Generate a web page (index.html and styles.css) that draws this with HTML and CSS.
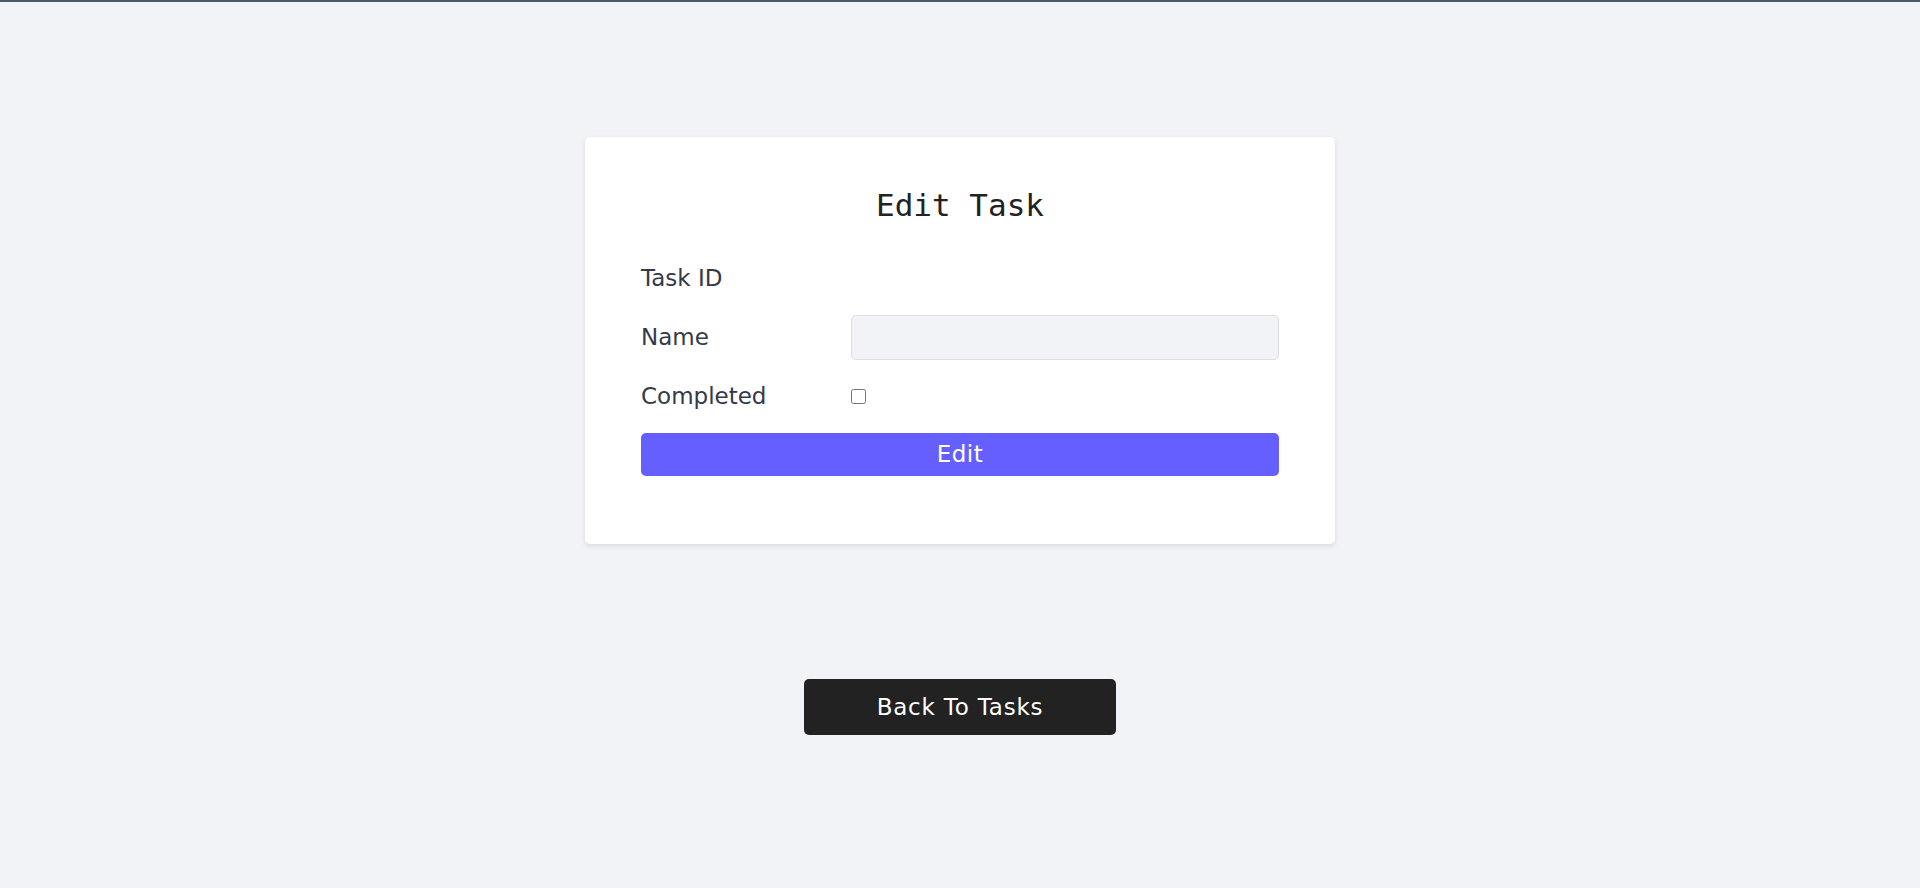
FILE: index.html
```html
<!DOCTYPE html>
<html lang="en">
<head>
<meta charset="utf-8">
<title>Edit Task</title>
<link rel="stylesheet" href="styles.css">
</head>
<body>
<main class="page">
  <section class="card">
    <h1 class="title">Edit Task</h1>
    <form class="form">
      <div class="row">
        <label class="label">Task ID</label>
        <span class="value"></span>
      </div>
      <div class="row">
        <label class="label" for="name">Name</label>
        <input class="input" id="name" type="text">
      </div>
      <div class="row">
        <label class="label" for="completed">Completed</label>
        <input class="check" id="completed" type="checkbox">
      </div>
      <button class="submit" type="button">Edit</button>
    </form>
  </section>
  <button class="back" type="button">Back To Tasks</button>
</main>
</body>
</html>
```
FILE: styles.css
```css
html, body {
  margin: 0;
  padding: 0;
}
body {
  background: #f2f3f7;
  border-top: 2px solid #4b5866;
  min-height: 886px;
  font-family: "DejaVu Sans", "Noto Sans", sans-serif;
  color: #343a4a;
}
.page {
  display: flex;
  flex-direction: column;
  align-items: center;
  padding-top: 135px;
}
.card {
  width: 750px;
  box-sizing: border-box;
  background: #ffffff;
  border-radius: 5px;
  box-shadow: 0 2px 5px rgba(40, 45, 70, 0.12);
  padding: 48px 56px 68px;
}
.title {
  margin: 0 0 31px;
  font-family: "DejaVu Sans Mono", "Liberation Mono", monospace;
  font-weight: normal;
  font-size: 31px;
  line-height: 40px;
  text-align: center;
  color: #222222;
}
.form {
  display: grid;
  grid-template-columns: 210px 1fr;
  row-gap: 14px;
}
.row {
  display: contents;
}
.label {
  font-size: 23px;
  line-height: 45px;
  min-height: 45px;
  color: #343a4a;
}
.value {
  min-height: 45px;
}
.input {
  box-sizing: border-box;
  height: 45px;
  width: 100%;
  margin: 0;
  background: #f2f3f7;
  border: 1px solid #dcdee6;
  border-radius: 5px;
  font-size: 20px;
  padding: 0 12px;
  align-self: center;
}
.check {
  width: 15px;
  height: 15px;
  margin: 0;
  align-self: center;
}
.submit {
  grid-column: 1 / -1;
  height: 43px;
  margin: 0;
  border: none;
  border-radius: 5px;
  background: #645ffe;
  color: #ffffff;
  font-family: "DejaVu Sans", "Noto Sans", sans-serif;
  font-size: 23px;
  line-height: 43px;
  letter-spacing: 0.5px;
  padding: 0;
}
.back {
  margin-top: 135px;
  width: 312px;
  height: 56px;
  border: none;
  border-radius: 5px;
  background: #222222;
  color: #ffffff;
  font-family: "DejaVu Sans", "Noto Sans", sans-serif;
  font-size: 23px;
  letter-spacing: 0.8px;
  padding: 0;
}
```
